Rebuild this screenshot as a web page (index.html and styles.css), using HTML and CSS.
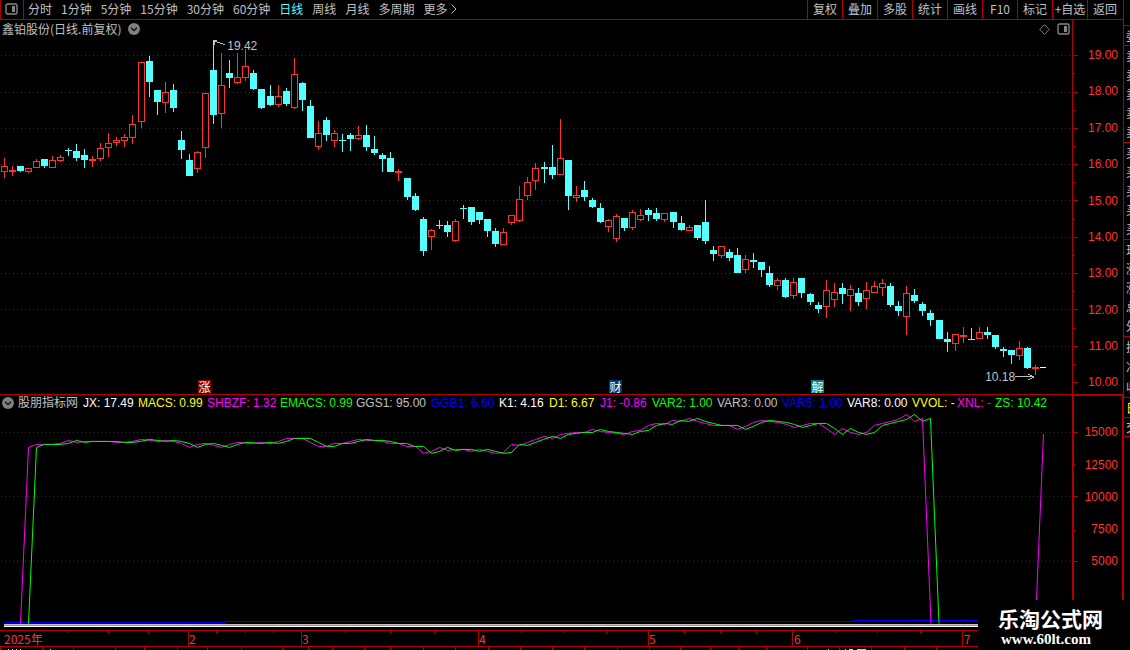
FILE: index.html
```html
<!DOCTYPE html>
<html lang="zh-CN">
<head>
<meta charset="utf-8">
<title>鑫铂股份 日线</title>
<link rel="stylesheet" href="styles.css">
</head>
<body>
<div class="app">
  <main class="workspace">
    <header class="toolbar">
      <button class="layout-btn" aria-label="布局"><svg class="icon" width="13" height="12" viewBox="0 0 13 12"><rect x="1" y="1" width="11" height="10" rx="1.5" fill="none" stroke="#868686" stroke-width="1.4"/><rect x="7" y="3" width="3" height="6" fill="#868686"/></svg></button>
      <nav class="periods">
        <button>分时</button><button>1分钟</button><button>5分钟</button><button>15分钟</button><button>30分钟</button><button>60分钟</button><button class="active">日线</button><button>周线</button><button>月线</button><button>多周期</button><button class="more">更多<svg width="6" height="10" viewBox="0 0 6 10"><path d="M.5.5 5 5 .5 9.5" fill="none" stroke="#c0c0c0"/></svg></button>
      </nav>
      <div class="tools">
        <button>复权</button><button>叠加</button><button>多股</button><button>统计</button><button>画线</button><button>F10</button><button>标记</button><button>+自选</button><button>返回</button>
      </div>
    </header>

    <section class="panel price-panel">
      <div class="plot">
        <svg class="chart" id="price" viewBox="0 20 1072 374" preserveAspectRatio="none"></svg>
        <div class="panel-head">
          <h1>鑫铂股份(日线.前复权)</h1>
          <button class="drop" aria-label="展开"><svg width="12" height="12" viewBox="0 0 12 12"><circle cx="6" cy="6" r="6" fill="#808080"/><path d="M3 4.7 6 7.5 9 4.7" fill="none" stroke="#111" stroke-width="1.3"/></svg></button>
          <div class="head-icons">
            <svg width="11" height="11" viewBox="0 0 11 11"><path d="M5.5.7 10.3 5.5 5.5 10.3.7 5.5Z" fill="none" stroke="#808080"/></svg>
            <svg width="13" height="12" viewBox="0 0 13 12"><rect x="1" y="1" width="11" height="10" rx="1.5" fill="none" stroke="#868686" stroke-width="1.4"/><rect x="7" y="3" width="3" height="6" fill="#868686"/></svg>
          </div>
        </div>
        <span class="note note-high">19.42</span>
        <span class="note note-low">10.18</span>
        <span class="badge badge-rise">涨</span>
        <span class="badge badge-fin">财</span>
        <span class="badge badge-unlock">解</span>
      </div>
      <div class="axis price-axis">
        <svg class="chart" id="price-ticks" viewBox="1073 20 50 374" preserveAspectRatio="none"></svg>
        <span>19.00</span><span>18.00</span><span>17.00</span><span>16.00</span><span>15.00</span><span>14.00</span><span>13.00</span><span>12.00</span><span>11.00</span><span>10.00</span>
      </div>
    </section>

    <section class="panel sub-panel">
      <div class="plot">
        <svg class="chart" id="sub" viewBox="0 395 1072 235" preserveAspectRatio="none"></svg>
        <div class="readout">
          <button class="drop" aria-label="指标菜单"><svg width="12" height="12" viewBox="0 0 12 12"><circle cx="6" cy="6" r="6" fill="#808080"/><path d="M3 4.7 6 7.5 9 4.7" fill="none" stroke="#111" stroke-width="1.3"/></svg></button>
          <span>股朋指标网</span><span class="white">JX: 17.49</span><span class="yellow">MACS: 0.99</span><span class="magenta">SHBZF: 1.32</span><span class="green">EMACS: 0.99</span><span>GGS1: 95.00</span><span class="blue">GGB1: 6.60</span><span class="white">K1: 4.16</span><span class="yellow">D1: 6.67</span><span class="magenta">J1: -0.86</span><span class="green">VAR2: 1.00</span><span>VAR3: 0.00</span><span class="blue">VAR5: 1.00</span><span class="white">VAR8: 0.00</span><span class="yellow">VVOL: -</span><span class="magenta">XNL: -</span><span class="green">ZS: 10.42</span>
        </div>
      </div>
      <div class="axis sub-axis">
        <svg class="chart" id="sub-ticks" viewBox="1074 396 48 234" preserveAspectRatio="none"></svg>
        <span>15000</span><span>12500</span><span>10000</span><span>7500</span><span>5000</span>
      </div>
    </section>

    <section class="time-axis">
      <svg class="chart" id="time-ticks" viewBox="0 631 1123 15" preserveAspectRatio="none"></svg>
      <span>2025年</span><span>2</span><span>3</span><span>4</span><span>5</span><span>6</span><span>7</span>
    </section>
    <footer class="next-pane"><svg class="chart" id="next-ticks" viewBox="0 647 1123 3" preserveAspectRatio="none"></svg></footer>
  </main>

  <aside class="quotes">
    <div class="group head"><span>委</span></div>
    <div class="group"><span>卖</span><span>卖</span><span>卖</span><span>卖</span><span>卖</span></div>
    <div class="group"><span>买</span><span>买</span><span>买</span><span>买</span><span>买</span></div>
    <div class="group"><span>现</span><span>涨</span><span>涨</span><span>总</span><span>外</span></div>
    <div class="group short"><span>换</span><span>净</span><span>收</span></div>
    <div class="group one yellow"><span>日</span></div>
    <div class="group one last"><span>交</span></div>
  </aside>
</div>
<div class="site-mark"><strong>乐淘公式网</strong><a href="#">www.60lt.com</a></div>
<script src="chart.js"></script>
</body>
</html>
```
FILE: styles.css
```css
* { box-sizing: border-box; }
body {
  margin: 0;
  background: #000;
  color: #c0c0c0;
  font: 12px/16px "Noto Sans CJK SC", sans-serif;
  overflow: hidden;
}
button {
  margin: 0;
  padding: 0;
  border: 0;
  background: none;
  color: inherit;
  font: inherit;
  white-space: nowrap;
}
svg { display: block; }
.app { display: grid; grid-template-columns: minmax(0, 1fr) 7px; height: 100vh; }
.workspace { display: flex; flex-direction: column; min-width: 0; }

.toolbar { display: flex; height: 20px; flex: none; border-bottom: 1px solid #b00000; }
.layout-btn {
  width: 24px;
  padding-left: 4px;
  padding-bottom: 2px;
  border: solid #b00000;
  border-width: 0 1px;
}
.periods { display: flex; gap: 9px; padding: 0 0 2px 4px; align-items: center; }
.periods .active { color: #54ffff; }
.more { display: flex; align-items: center; gap: 4px; }
.tools { display: flex; margin-left: auto; padding-right: 1px; }
.tools button { width: 35px; padding-bottom: 2px; border-left: 1px solid #b00000; }

.panel { display: flex; min-height: 0; }
.price-panel { flex: 375 1 0; border-bottom: 1px solid #b00000; }
.sub-panel { flex: 235 1 0; }
.plot { position: relative; flex: 1; min-width: 0; }
.chart { position: absolute; inset: 0; width: 100%; height: 100%; shape-rendering: crispEdges; }
.panel-head { position: relative; display: flex; align-items: center; gap: 7px; padding: 1px 2px 0 2px; }
h1 { margin: 0; font-size: 12px; font-weight: 400; line-height: 16px; }
.head-icons { display: flex; align-items: center; gap: 7px; margin-left: auto; }

.axis {
  position: relative;
  display: flex;
  flex-direction: column;
  justify-content: space-between;
  width: 51px;
  padding-right: 5px;
  border-left: 1px solid #b00000;
  color: #ff3232;
  font-family: "Liberation Sans", sans-serif;
  text-align: right;
}
.price-axis { padding-top: 27px; padding-bottom: 4px; }
.sub-axis {
  margin-top: -1px;
  padding: 28px 4px 61px 0;
  border: solid #b00000;
  border-width: 2px 1px 0 2px;
}

.note { position: absolute; font-family: "Liberation Sans", sans-serif; }
.note-high { left: 21.2%; top: 4.8%; }
.note-low { left: 91.9%; bottom: 2.4%; }
.badge {
  position: absolute;
  bottom: 1px;
  width: 13px;
  height: 13px;
  color: #fff;
  line-height: 13px;
  text-align: center;
}
.badge-rise { left: 18.47%; background: #800000; }
.badge-fin { left: 56.8%; background: #003c70; }
.badge-unlock { left: 75.66%; background: #008080; }

.readout {
  position: relative;
  display: grid;
  grid-template-columns: 16px 65px 55px 69px 73px 76px 75px 68px 50px 51px 52px 65px 65px 65px 65px 45px 38px 60px;
  align-items: center;
  padding-left: 2px;
  white-space: nowrap;
}
.readout span { font-family: "Liberation Sans", "Noto Sans CJK SC", sans-serif; }
.white { color: #fff; }
.yellow { color: #ff0; }
.magenta { color: #f0f; }
.green { color: #0f0; }
.blue { color: #00f; }

.time-axis {
  position: relative;
  display: grid;
  grid-template-columns: 185fr 113fr 177fr 170fr 145fr 170fr 159fr;
  flex: none;
  height: 17px;
  padding-left: 4px;
  border: solid #b00000;
  border-width: 1px 0;
  color: #ff3232;
  line-height: 15px;
}
.next-pane { position: relative; flex: none; height: 3px; }

.quotes { overflow: hidden; padding-top: 25px; border-left: 1px solid #b00000; }
.group {
  display: flex;
  flex-direction: column;
  justify-content: space-around;
  height: 97px;
  padding-left: 2px;
  border-top: 1px solid #b00000;
}
.group span { width: 12px; }
.group.head { height: 20px; }
.group.short { height: 61px; }
.group.one { height: 20px; }
.group.last { border-bottom: 1px solid #b00000; }

.site-mark {
  position: absolute;
  right: 0;
  bottom: 0;
  display: flex;
  flex-direction: column;
  width: 152px;
  height: 50px;
  padding: 6px 0 0 20px;
  background: #000;
  color: #fff;
}
.site-mark strong { font-size: 21px; line-height: 25px; }
.site-mark a {
  padding-left: 3px;
  color: #fff;
  font: bold 15px/16px "Liberation Serif", serif;
  text-decoration: none;
}
```
FILE: chart.js
```js
const RED = '#ff3232', CYAN = '#54ffff', LINE = '#b00000';

// Each candle: x, direction, body top, body bottom, wick top, wick bottom
const candles = `4u166,172,158,178 12u170,172,166,176 20d166,171,166,172 28u168,172,168,173 36u161,168,159,168
44d159,166,159,168 52u160,168,156,168 60u157,161,155,162 68d150,151,148,156 76d151,158,144,161 84d155,160,149,168
92u159,161,156,167 100u148,159,143,161 108u143,148,133,157 116u140,143,137,146 124u137,141,134,147 132u124,138,115,144
141u62,122,62,128 149d61,82,56,97 157d90,102,90,115 165u92,103,82,113 173d90,108,84,112 181d140,150,131,159
189d160,176,154,176 197u152,169,151,173 205u93,148,93,158 213d70,115,40,124 221u85,114,53,128 229d73,78,60,88
237u77,83,53,84 245u66,78,49,81 253d73,89,70,90 261d89,108,89,109 270d96,105,85,106 278u96,105,85,107
286d91,104,88,106 294u74,108,58,109 302d83,100,82,111 310d106,138,100,138 318u133,147,121,150 326d120,135,117,141
334u133,141,130,147 342d140,141,134,152 350d135,139,133,151 358u135,139,126,140 366d135,147,125,151 374d149,153,136,155
382d155,159,153,172 390d158,172,152,172 398u171,173,169,181 407d178,197,178,200 415d196,210,193,211 423d219,251,217,256
431u230,237,229,250 439d225,226,220,229 447d225,232,221,237 455u221,241,219,242 463d208,209,205,219 471d207,222,207,225
479d212,220,212,224 487d219,231,219,237 495d231,244,228,247 503u232,245,228,245 511u215,223,215,225 519u199,221,186,222
527u182,196,177,200 535u168,181,163,190 544d167,169,162,183 552d167,175,145,179 560u158,175,119,175 568d160,196,160,210
576u195,198,186,202 584d190,197,181,201 592d200,207,198,208 600d208,222,203,223 608u220,227,219,232 616u216,239,214,242
624d218,228,218,231 632u212,228,210,230 640u215,220,209,221 648d210,215,208,221 656d213,219,208,221 664u213,220,213,222
673d212,222,212,228 681d223,230,216,231 689u227,231,225,231 697d225,238,225,240 705d222,241,200,244 713d250,254,246,261
721u246,256,246,258 729d252,258,249,261 737d255,273,248,273 745u259,270,255,273 753d260,262,253,268 761d262,270,262,277
769d273,285,266,287 777u280,286,278,290 785d280,297,278,298 793u282,296,278,299 801d278,293,278,298 810d294,302,293,305
818d305,309,302,313 826u290,307,280,318 834u292,300,283,307 842d288,294,283,304 850u289,296,285,311 858d293,302,288,306
866u290,299,282,309 874u286,293,281,293 882u283,288,279,296 890d286,305,283,307 898d306,311,301,316 906u293,317,286,335
914d295,301,289,303 922d304,311,302,316 930d313,320,310,326 939d320,339,320,339 947d339,342,332,352 955u334,344,334,351
963u335,337,327,343 971d339,340,328,340 979u332,339,327,339 987d332,335,327,339 995d335,347,335,349 1003d349,351,347,357
1011d350,355,350,364 1019u348,356,341,360 1027d348,368,347,369 1035u367,369,365,375`.split(/\s+/).map(s => {
  const [, x, dir, rest] = s.match(/^(\d+)([ud])(.+)$/);
  return [+x, dir, ...rest.split(',').map(Number)];
});

const rect = (x, y, w, h, fill) => `<rect x="${x}" y="${y}" width="${w}" height="${h}" fill="${fill}"/>`;
const grid = ys => ys.map(y =>
  `<path d="M1 ${y}.5H1071" stroke="${LINE}" stroke-dasharray="1 3"/>`).join('');
const put = (id, markup) => { document.getElementById(id).innerHTML = markup; };

const candle = ([x, dir, top, bottom, high, low]) => {
  if (dir === 'd') return rect(x, high, 1, low - high, CYAN) + rect(x - 3, top, 7, bottom - top, CYAN);
  const wick = rect(x, high, 1, top - high, RED) + rect(x, bottom, 1, low - bottom, RED);
  if (bottom - top < 3) return wick + rect(x - 3, top, 7, bottom - top, RED);
  return wick + `<rect x="${x - 2.5}" y="${top + .5}" width="6" height="${bottom - top - 1}" fill="#000" stroke="${RED}"/>`;
};

put('price', grid([55, 92, 128, 164, 200, 237, 273, 309, 346]) + candles.map(candle).join('') +
  rect(1040, 367, 6, 1, '#fff') +
  `<g fill="none" stroke="#c0c0c0"><path d="M213 40.5H217M214.5 40V45M215 41.5L225 44.5"/><path d="M1015 376.5H1034M1028 373.5L1034 376.5L1028 379.5"/></g>`);

const majors = [55, 92, 128, 164, 200, 237, 273, 309, 346, 382];
const minors = [73, 110, 146, 182, 219, 255, 291, 328, 364];
put('price-ticks', majors.map(y => rect(1073, y, 5, 1, LINE)).join('') + minors.map(y => rect(1073, y, 2, 1, LINE)).join(''));
put('sub-ticks', [432, 496, 561].map(y => rect(1074, y, 4, 1, LINE)).join('') + [464, 530].map(y => rect(1074, y, 1, 1, LINE)).join(''));

// Indicator curve; the second line is the same series one bar later
const curve = `28,447 36,444 44,444 52,444 60,443 68,440 76,442 84,441 108,441 116,442 124,442 132,441 141,439 149,440
157,441 165,440 173,441 181,443 189,447 197,444 205,443 213,445 221,447 229,444 237,442 253,443 261,442 270,443 278,441
286,438 302,438 310,442 318,446 326,446 334,443 342,443 350,441 358,439 366,440 374,440 382,441 390,443 398,443 406,446
415,446 423,453 431,451 439,447 447,450 455,449 463,449 471,451 479,449 487,451 495,453 503,452 511,444 519,445 527,442
535,439 544,436 552,438 560,434 568,433 576,432 584,432 592,429 600,431 608,432 616,433 624,434 632,431 640,430 648,425
656,423 664,424 672,420 680,421 689,418 697,421 705,423 713,425 729,425 737,429 745,426 753,422 761,420 770,421 778,422
786,424 794,427 802,425 810,423 818,423 826,428 834,434 842,428 850,432 858,434 866,432 874,425 882,423 890,421 898,419
906,414 914,421 922,418`.split(/\s+/).map(p => p.split(',').map(Number));
const trace = (shift, color) =>
  `<polyline fill="none" stroke="${color}" points="${20.5 + shift},624 ${curve.map(([x, y]) => `${x + shift + .5},${y + .5}`).join(' ')} ${931 + shift},624"/>`;

put('sub', grid([432, 496, 561]) +
  rect(4, 622, 221, 1, '#00f') + rect(225, 621, 629, 1, '#00f') + rect(854, 620, 218, 1, '#00f') +
  trace(0, '#f0f') + trace(8, '#0f0') +
  '<path d="M1043.5 434L1035.5 624" stroke="#f0f"/>' +
  rect(4, 624, 1068, 1, '#c0c0c0') + rect(4, 625, 1068, 1, '#0f0') + rect(4, 626, 1068, 1, '#fff'));

put('time-ticks',
  [188, 301, 478, 648, 792, 962].map(x => rect(x, 631, 1, 15, LINE)).join('') +
  [67, 108, 148, 216, 245, 273, 345, 390, 434, 521, 563, 606, 684, 720, 756, 835, 877, 920].map(x => rect(x, 631, 1, 2, LINE)).join(''));
put('next-ticks',
  [0, 42, 73, 115, 144, 177, 207, 241, 282, 308, 332, 364, 390, 423, 455, 488, 520, 552, 584, 617, 649, 680, 710, 738, 766, 807, 839, 871, 904, 936]
    .map(x => rect(x, 647, 1, 3, LINE)).join('') +
  [8, 12, 16, 20, 50, 828].map(x => rect(x, 649, 1, 1, '#c0c0c0')).join('') +
  rect(845, 649, 1, 1, CYAN) + rect(849, 649, 4, 1, CYAN) + rect(857, 649, 9, 1, CYAN));
```
